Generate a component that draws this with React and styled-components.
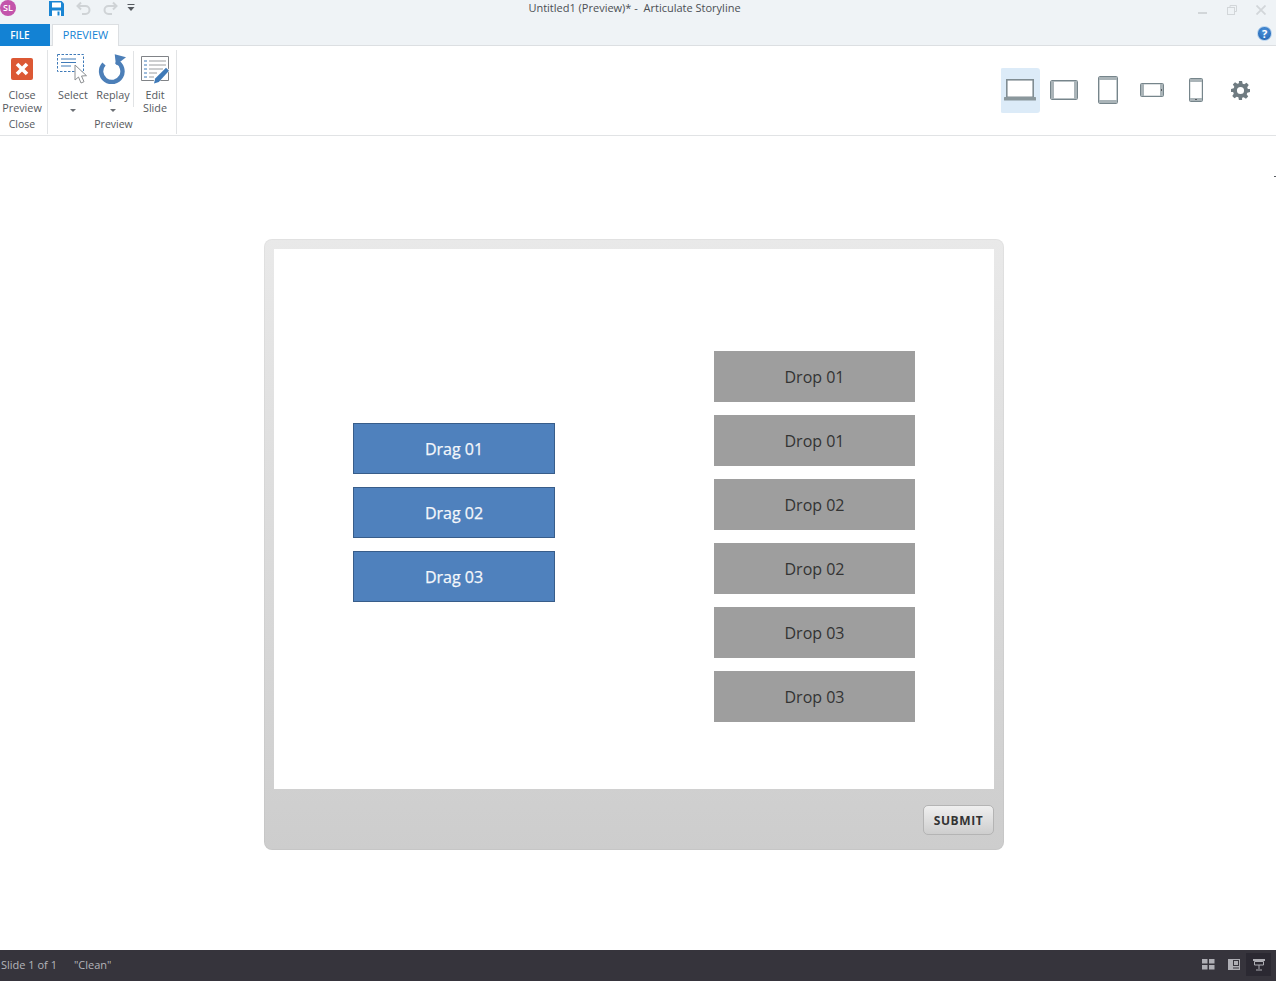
import React from 'react';
import styled, { createGlobalStyle } from 'styled-components';

const GlobalStyle = createGlobalStyle`
  html, body {
    margin: 0;
    padding: 0;
    height: 100%;
    overflow: hidden;
    background: #fff;
  }
  body {
    font-family: "Open Sans", "Liberation Sans", sans-serif;
  }
`;

const Page = styled.div`
  display: flex;
  flex-direction: column;
  height: 100vh;
  position: relative;
`;

const Chrome = styled.div`
  background: #eff3f6;
  height: 45px;
  border-bottom: 1px solid #dcdfe2;
  display: flex;
  flex-direction: column;
`;

const TitleBar = styled.div`
  height: 24px;
  display: grid;
  grid-template-columns: 1fr auto 1fr;
  padding-right: 7px;
`;

const QuickAccess = styled.div`
  display: flex;
  align-items: flex-start;
`;

const AppBadge = styled.div`
  width: 16px;
  height: 16px;
  border-radius: 50%;
  background: #c354ab;
  color: #fff;
  font-size: 9px;
  font-weight: 600;
  line-height: 16px;
  text-align: center;
`;

const QuickIcon = styled.svg`
  display: block;
  margin-left: ${(props) => props.$left}px;
  margin-top: ${(props) => props.$top || 1}px;
`;

const WindowTitle = styled.div`
  font-size: 11px;
  color: #4b4f54;
  line-height: 16px;
  white-space: pre;
`;

const WindowControls = styled.div`
  display: flex;
  justify-content: flex-end;
  gap: 19px;
  padding: 5px 3px 0 0;
`;

const ControlIcon = styled.svg`
  display: block;
`;

const TabRow = styled.div`
  height: 21px;
  display: flex;
  position: relative;
`;

const FileTab = styled.div`
  box-sizing: border-box;
  width: 50px;
  height: 22px;
  padding-right: 10px;
  background: #1382d4;
  color: #fff;
  font-size: 10px;
  font-weight: 600;
  line-height: 22px;
  text-align: center;
`;

const PreviewTab = styled.div`
  box-sizing: border-box;
  width: 67px;
  height: 22px;
  margin-left: 2px;
  background: #fff;
  border: 1px solid #dcdfe2;
  border-bottom: none;
  color: #1382d4;
  font-size: 11px;
  line-height: 19px;
  text-align: center;
`;

const HelpButton = styled.div`
  position: absolute;
  right: 4px;
  top: 2px;
  width: 15px;
  height: 15px;
  border-radius: 50%;
  background: radial-gradient(circle at 50% 35%, #4f95dc, #1d5fae);
  border: 1px solid #b5d2ee;
  box-sizing: border-box;
  color: #fff;
  font-size: 11px;
  font-weight: 700;
  line-height: 13px;
  text-align: center;
`;

const Ribbon = styled.div`
  height: 89px;
  border-bottom: 1px solid #e1e3e5;
  display: flex;
  justify-content: space-between;
  align-items: center;
  background: #fff;
`;

const RibbonGroups = styled.div`
  display: flex;
  height: 84px;
  align-self: flex-start;
  padding-top: 4px;
`;

const Group = styled.div`
  box-sizing: border-box;
  width: ${(props) => props.$width}px;
  padding: 0 ${(props) => props.$right || 0}px 0 ${(props) => props.$left || 0}px;
  border-right: 1px solid #e1e3e5;
  display: flex;
  flex-direction: column;
  align-items: center;
`;

const GroupButtons = styled.div`
  height: 67px;
  display: flex;
  align-self: stretch;
  justify-content: flex-end;
`;

const GroupLabel = styled.div`
  font-size: 10.5px;
  line-height: 14px;
  color: #55595e;
`;

const RibbonButton = styled.div`
  width: ${(props) => props.$width}px;
  display: flex;
  flex-direction: column;
  align-items: center;
  font-size: 10.8px;
  line-height: 12.5px;
  color: #55595e;
  text-align: center;
`;

const IconSlot = styled.div`
  flex-shrink: 0;
  height: 38px;
  padding-top: ${(props) => props.$top}px;
  box-sizing: border-box;
`;

const ButtonText = styled.div`
  margin-top: 1px;
`;

const Caret = styled.div`
  width: 0;
  height: 0;
  margin-top: 7px;
  border-left: 3px solid transparent;
  border-right: 3px solid transparent;
  border-top: 3px solid #6b6f74;
`;

const InnerDivider = styled.div`
  width: 1px;
  height: 56px;
  background: #e1e3e5;
  margin-top: 1px;
`;

const DrawnIcon = styled.svg`
  display: block;
`;

const DeviceBar = styled.div`
  display: flex;
  gap: 4px;
  padding-right: 16px;
`;

const DeviceButton = styled.div`
  box-sizing: border-box;
  width: 40px;
  height: 45px;
  padding-bottom: 1px;
  border-radius: 3px;
  background: ${(props) => (props.$active ? 'linear-gradient(90deg, #fff 1px, #dcebf8 1px)' : 'transparent')};
  display: flex;
  align-items: center;
  justify-content: center;
`;

const Stage = styled.div`
  flex: 1;
  display: flex;
  justify-content: center;
  padding: 103px 8px 0 0;
  position: relative;
`;

const StrayMark = styled.div`
  position: absolute;
  right: 0;
  top: 40px;
  width: 2px;
  height: 1px;
  background: #55595e;
`;

const Player = styled.div`
  box-sizing: border-box;
  width: 740px;
  height: 611px;
  padding: 10px 10px 0;
  border-radius: 8px;
  background: linear-gradient(#e9e9e9, #cdcdcd);
  box-shadow: inset 0 0 0 1px rgba(0, 0, 0, 0.03);
`;

const Slide = styled.div`
  height: 540px;
  background: #fff;
  display: flex;
  padding-left: 79px;
  box-sizing: border-box;
`;

const Column = styled.div`
  width: 202px;
  display: flex;
  flex-direction: column;
  gap: 13px;
  margin-top: ${(props) => props.$top}px;
  margin-left: ${(props) => props.$left || 0}px;
`;

const DragBox = styled.div`
  box-sizing: border-box;
  height: 51px;
  background: #4f81bd;
  border: 1px solid #385d8a;
  color: #f4f7fb;
  font-size: 16px;
  -webkit-text-stroke: 0.25px #f4f7fb;
  display: flex;
  align-items: center;
  justify-content: center;
`;

const DropBox = styled.div`
  width: 201px;
  height: 51px;
  background: #9e9e9e;
  color: #333;
  font-size: 16px;
  display: flex;
  align-items: center;
  justify-content: center;
`;

const PlayerFooter = styled.div`
  height: 61px;
  display: flex;
  justify-content: flex-end;
  padding-top: 16px;
  box-sizing: border-box;
`;

const SubmitButton = styled.div`
  box-sizing: border-box;
  width: 71px;
  height: 30px;
  border: 1px solid #b4b4b4;
  border-radius: 5px;
  background: linear-gradient(#efefef, #cecece);
  color: #333;
  font-size: 12px;
  font-weight: 700;
  letter-spacing: 0.6px;
  line-height: 29px;
  text-align: center;
`;

const StatusBar = styled.div`
  height: 31px;
  background: #36343c;
  color: #b4b4ba;
  font-size: 11px;
  display: flex;
  align-items: center;
  justify-content: space-between;
  padding: 0 5px 2px 1px;
  box-sizing: border-box;
`;

const StatusText = styled.div`
  display: flex;
  gap: 17px;
`;

const StatusIcons = styled.div`
  display: flex;
  align-items: center;
`;

const ViewButton = styled.div`
  width: 25px;
  height: 23px;
  display: flex;
  align-items: center;
  justify-content: center;
  background: ${(props) => (props.$active ? '#2b2932' : 'transparent')};
`;

const DEVICE = '#76858b';

const SaveIcon = () => (
  <QuickIcon $left={33} width="15" height="15" viewBox="0 0 15 15">
    <path d="M0 0h12.500L15 2.500V15H0z" fill="#1a85d3" />
    <rect x="3" y="1.500" width="9" height="5" fill="#fff" />
    <rect x="3" y="9.500" width="9" height="5.500" fill="#fff" />
    <rect x="8.500" y="10.500" width="2" height="4" fill="#1a85d3" />
  </QuickIcon>
);

const UndoIcon = ({ flip, left }) => (
  <QuickIcon $left={left} width="16" height="15" viewBox="0 0 16 15">
    <g transform={flip ? 'translate(16 0) scale(-1 1)' : undefined}>
      <path d="M5 1.500L1.500 5 5 8.500" fill="none" stroke="#cfd3d6" strokeWidth="2" />
      <path d="M2 5h7.500a4 4 0 0 1 0 8H6" fill="none" stroke="#cfd3d6" strokeWidth="2" />
    </g>
  </QuickIcon>
);

const QuickMenu = () => (
  <QuickIcon $left={9} $top={3} width="8" height="10" viewBox="0 0 8 10">
    <rect x="0.500" y="1" width="7" height="1" fill="#55595e" />
    <path d="M0.500 4h7L4 8z" fill="#55595e" />
  </QuickIcon>
);

const CloseXIcon = () => (
  <DrawnIcon width="22" height="22" viewBox="0 0 22 22">
    <rect width="22" height="22" rx="2" fill="#dc5834" />
    <path d="M6 6l10 10M16 6L6 16" stroke="#fff" strokeWidth="3.600" />
  </DrawnIcon>
);

const SelectIcon = () => (
  <DrawnIcon width="32" height="31" viewBox="0 0 32 31">
    <rect x="0.500" y="0.500" width="26" height="17" fill="none" stroke="#3f7ab8" strokeDasharray="2.500 1.500" />
    <path d="M4 5h15M4 8.500h15M4 12h10" stroke="#3f7ab8" />
    <path d="M18 11v15l3.500-3 2.500 6 3-1.300-2.500-5.700 5-.3z" fill="#fff" stroke="#8c8f92" />
  </DrawnIcon>
);

const ReplayIcon = () => (
  <DrawnIcon width="30" height="31" viewBox="0 0 30 31">
    <path d="M6 11A10.700 10.700 0 1 0 18 8.500" fill="none" stroke="#4c7fb8" strokeWidth="4.400" />
    <path d="M16.700 1.300L28 4.300 18 12z" fill="#4c7fb8" />
  </DrawnIcon>
);

const EditIcon = () => (
  <DrawnIcon width="30" height="28" viewBox="-1 0 30 28">
    <path d="M0.500 0.500h27v24h-27z" fill="#fff" stroke="#808387" />
    <path d="M3 5h3M3 9h3M3 13h3M3 17h3M3 21h3" stroke="#3f7ab8" />
    <path d="M8 5h17M8 9h17M8 13h14M8 17h8M8 21h5" stroke="#9a9da0" />
    <path d="M12 28l1.500-6L25 10.500l4 4L17.500 26.500z" fill="#fff" />
    <path d="M13 27.500l1.200-5L25 11.700l3 3L17.800 26z" fill="#3f7ab8" />
  </DrawnIcon>
);

const LaptopIcon = () => (
  <DrawnIcon width="32" height="22" viewBox="0 0 32 22">
    <rect x="2.800" y="0.800" width="26.400" height="17.500" fill="#fff" stroke="#808d93" strokeWidth="1.600" />
    <rect x="0" y="18" width="32" height="3.500" rx="0.500" fill="#8a979c" />
  </DrawnIcon>
);

const TabletWideIcon = () => (
  <DrawnIcon width="28" height="20" viewBox="0 0 28 20">
    <rect x="0.700" y="0.700" width="26.600" height="18.600" rx="1.500" fill="#fff" stroke={DEVICE} strokeWidth="1.400" />
    <rect x="1" y="1" width="3" height="18" fill="#aab4b8" />
    <rect x="24" y="1" width="3" height="18" fill="#aab4b8" />
  </DrawnIcon>
);

const TabletTallIcon = () => (
  <DrawnIcon width="20" height="28" viewBox="0 0 20 28">
    <rect x="0.700" y="0.700" width="18.600" height="26.600" rx="1.500" fill="#fff" stroke={DEVICE} strokeWidth="1.400" />
    <rect x="1" y="1" width="18" height="3" fill="#aab4b8" />
    <rect x="1" y="24" width="18" height="3" fill="#aab4b8" />
  </DrawnIcon>
);

const PhoneWideIcon = () => (
  <DrawnIcon width="24" height="14" viewBox="0 0 24 14">
    <rect x="0.600" y="0.600" width="22.800" height="12.800" rx="1.500" fill="#fff" stroke={DEVICE} strokeWidth="1.200" />
    <rect x="1" y="1" width="3" height="12" fill="#aab4b8" />
    <rect x="20" y="1" width="3" height="12" fill="#aab4b8" />
    <rect x="21" y="6" width="1" height="2" fill="#55595e" />
  </DrawnIcon>
);

const PhoneTallIcon = () => (
  <DrawnIcon width="14" height="24" viewBox="0 0 14 24">
    <rect x="0.600" y="0.600" width="12.800" height="22.800" rx="1.500" fill="#fff" stroke={DEVICE} strokeWidth="1.200" />
    <rect x="1" y="1" width="12" height="3" fill="#aab4b8" />
    <rect x="1" y="20" width="12" height="3" fill="#aab4b8" />
    <rect x="6" y="21" width="2" height="1" fill="#55595e" />
  </DrawnIcon>
);

const GearIcon = () => (
  <DrawnIcon width="19" height="19" viewBox="0 0 24 24">
    <path
      fill="#6f7b81"
      fillRule="evenodd"
      d="M10 0h4l.7 3.400 2 .8L19.600 2.300l2.800 2.800-1.900 2.900.8 2L24 10v4l-3.400.7-.8 2 1.900 2.900-2.800 2.800-2.900-1.900-2 .8L14 24h-4l-.7-3.400-2-.8-2.900 1.900-2.800-2.800 1.900-2.900-.8-2L0 14v-4l3.400-.7.8-2-1.900-2.900 2.800-2.800 2.900 1.900 2-.8zM12 7.500a4.500 4.500 0 1 0 0 9 4.500 4.500 0 0 0 0-9z"
    />
  </DrawnIcon>
);

const GridViewIcon = () => (
  <DrawnIcon width="13" height="11" viewBox="0 0 13 11">
    <path d="M0 0h5.500v4.500H0zM7 0h5.500v4.500H7zM0 6h5.500v4.500H0zM7 6h5.500v4.500H7z" fill="#aeaeb4" />
  </DrawnIcon>
);

const NotesViewIcon = () => (
  <DrawnIcon width="12" height="11" viewBox="0 0 12 11">
    <rect width="12" height="11" fill="#aeaeb4" />
    <rect x="5.500" y="1.500" width="5" height="5" fill="#aeaeb4" stroke="#36343c" />
    <rect x="5" y="8.500" width="6" height="1" fill="#36343c" />
  </DrawnIcon>
);

const ShowViewIcon = () => (
  <DrawnIcon width="12" height="12" viewBox="0 0 12 12">
    <rect x="0" y="0" width="12" height="2" fill="#aeaeb4" />
    <path d="M1.500 2.500h9v3.500h-9z" fill="none" stroke="#aeaeb4" />
    <path d="M6 6v4M3 11h6" stroke="#aeaeb4" />
  </DrawnIcon>
);

const drags = ['Drag 01', 'Drag 02', 'Drag 03'];
const drops = ['Drop 01', 'Drop 01', 'Drop 02', 'Drop 02', 'Drop 03', 'Drop 03'];

function App() {
  return (
    <>
      <GlobalStyle />
      <Page>
        <Chrome>
          <TitleBar>
            <QuickAccess>
              <AppBadge>SL</AppBadge>
              <SaveIcon />
              <UndoIcon left={12} />
              <UndoIcon left={10} flip />
              <QuickMenu />
            </QuickAccess>
            <WindowTitle>{'Untitled1 (Preview)* -  Articulate Storyline'}</WindowTitle>
            <WindowControls>
              <ControlIcon width="10" height="10" viewBox="0 0 10 10">
                <rect x="0" y="7" width="9" height="2" fill="#d2d6d9" />
              </ControlIcon>
              <ControlIcon width="10" height="10" viewBox="0 0 10 10">
                <path d="M3 2.500V.500h6.500v6H7.500" fill="none" stroke="#d2d6d9" />
                <rect x="0.500" y="2.500" width="7" height="7" fill="none" stroke="#d2d6d9" />
              </ControlIcon>
              <ControlIcon width="10" height="10" viewBox="0 0 10 10">
                <path d="M.500 .500l9 9M9.500 .500l-9 9" stroke="#d2d6d9" strokeWidth="1.800" />
              </ControlIcon>
            </WindowControls>
          </TitleBar>
          <TabRow>
            <FileTab>FILE</FileTab>
            <PreviewTab>PREVIEW</PreviewTab>
            <HelpButton>?</HelpButton>
          </TabRow>
        </Chrome>

        <Ribbon>
          <RibbonGroups>
            <Group $width={48} $right={3}>
              <GroupButtons>
                <RibbonButton $width={44}>
                  <IconSlot $top={8}>
                    <CloseXIcon />
                  </IconSlot>
                  <ButtonText>Close Preview</ButtonText>
                </RibbonButton>
              </GroupButtons>
              <GroupLabel>Close</GroupLabel>
            </Group>
            <Group $width={129} $left={3}>
              <GroupButtons>
                <RibbonButton $width={40}>
                  <IconSlot $top={4}>
                    <SelectIcon />
                  </IconSlot>
                  <ButtonText>Select</ButtonText>
                  <Caret />
                </RibbonButton>
                <RibbonButton $width={40}>
                  <IconSlot $top={3}>
                    <ReplayIcon />
                  </IconSlot>
                  <ButtonText>Replay</ButtonText>
                  <Caret />
                </RibbonButton>
                <InnerDivider />
                <RibbonButton $width={42}>
                  <IconSlot $top={6}>
                    <EditIcon />
                  </IconSlot>
                  <ButtonText>Edit Slide</ButtonText>
                </RibbonButton>
              </GroupButtons>
              <GroupLabel>Preview</GroupLabel>
            </Group>
          </RibbonGroups>

          <DeviceBar>
            <DeviceButton $active>
              <LaptopIcon />
            </DeviceButton>
            <DeviceButton>
              <TabletWideIcon />
            </DeviceButton>
            <DeviceButton>
              <TabletTallIcon />
            </DeviceButton>
            <DeviceButton>
              <PhoneWideIcon />
            </DeviceButton>
            <DeviceButton>
              <PhoneTallIcon />
            </DeviceButton>
            <DeviceButton>
              <GearIcon />
            </DeviceButton>
          </DeviceBar>
        </Ribbon>

        <Stage>
          <StrayMark />
          <Player>
            <Slide>
              <Column $top={174}>
                {drags.map((label) => (
                  <DragBox key={label}>{label}</DragBox>
                ))}
              </Column>
              <Column $top={102} $left={159}>
                {drops.map((label, i) => (
                  <DropBox key={i}>{label}</DropBox>
                ))}
              </Column>
            </Slide>
            <PlayerFooter>
              <SubmitButton>SUBMIT</SubmitButton>
            </PlayerFooter>
          </Player>
        </Stage>

        <StatusBar>
          <StatusText>
            <span>Slide 1 of 1</span>
            <span>"Clean"</span>
          </StatusText>
          <StatusIcons>
            <ViewButton>
              <GridViewIcon />
            </ViewButton>
            <ViewButton>
              <NotesViewIcon />
            </ViewButton>
            <ViewButton $active>
              <ShowViewIcon />
            </ViewButton>
          </StatusIcons>
        </StatusBar>
      </Page>
    </>
  );
}

export default App;
